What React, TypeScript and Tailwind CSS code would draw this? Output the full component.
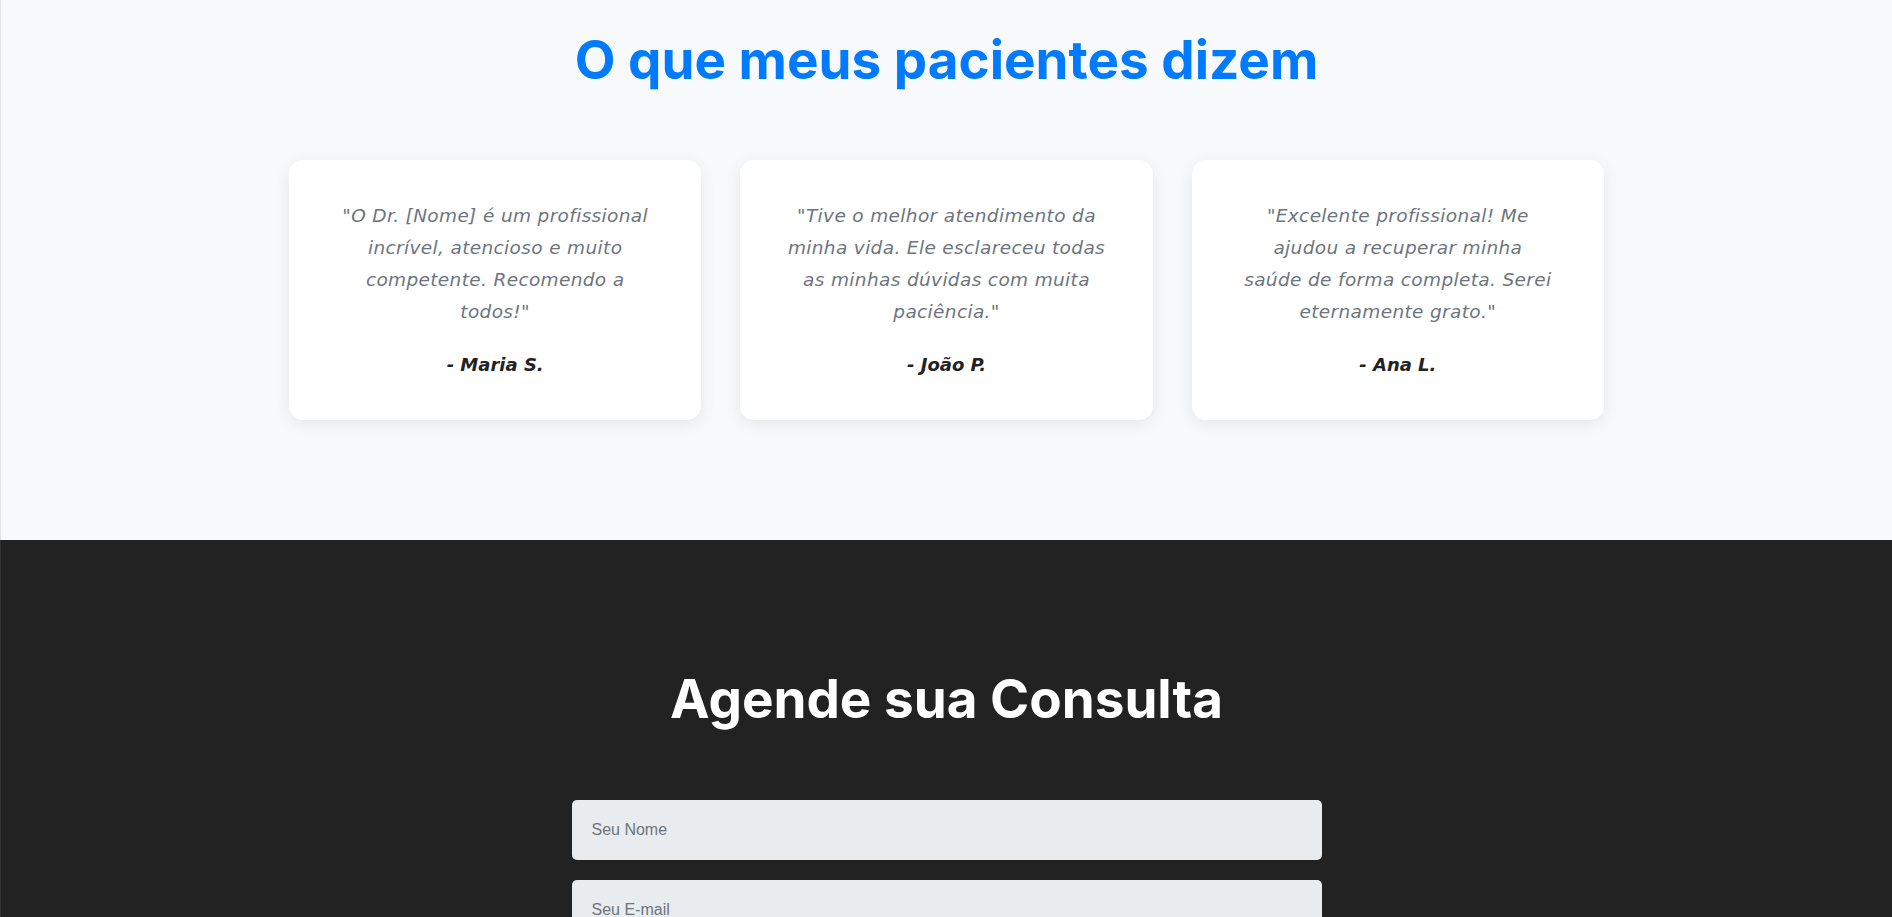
const depoimentos = [
  {
    linhas: ['"O Dr. [Nome] é um profissional', "incrível, atencioso e muito", "competente. Recomendo a", 'todos!"'],
    autor: "- Maria S.",
  },
  {
    linhas: ['"Tive o melhor atendimento da', "minha vida. Ele esclareceu todas", "as minhas dúvidas com muita", 'paciência."'],
    autor: "- João P.",
  },
  {
    linhas: ['"Excelente profissional! Me', "ajudou a recuperar minha", "saúde de forma completa. Serei", 'eternamente grato."'],
    autor: "- Ana L.",
  },
];

export default function App() {
  return (
    <div className="min-h-screen bg-[#222222] font-['Inter','Open_Sans',sans-serif]">
      {/* Depoimentos */}
      <section className="bg-[#f8f9fa] border-l border-[#e2e3e5] pt-[28px] pb-[120px]">
        <h2 className="text-center text-[53px] leading-[64px] font-bold text-[#007bff]">
          O que meus pacientes dizem
        </h2>

        <div className="mx-auto mt-[68px] grid w-[1315px] grid-cols-3 gap-[39px]">
          {depoimentos.map((d) => (
            <div key={d.autor} className="rounded-[14px] bg-white p-10 text-center shadow-[0_4px_16px_rgba(0,0,0,0.08)]">
              <p className="font-['DejaVu_Sans',sans-serif] text-[18.5px] leading-[32px] tracking-[0.35px] italic text-[#6c757d]">
                {d.linhas.map((l) => (
                  <span key={l} className="block">
                    {l}
                  </span>
                ))}
              </p>
              <p className="mt-[22px] font-['DejaVu_Sans',sans-serif] text-[18px] leading-[30px] font-bold italic text-[#222222]">
                {d.autor}
              </p>
            </div>
          ))}
        </div>
      </section>

      {/* Agendamento */}
      <section className="border-l border-[#333333] pt-[127px] pb-20">
        <h2 className="text-center text-[53px] leading-[64px] font-bold text-white">
          Agende sua Consulta
        </h2>

        <form className="mx-auto mt-[69px] flex w-[750px] flex-col gap-5">
          <input
            type="text"
            placeholder="Seu Nome"
            className="h-[60px] rounded-[5px] bg-[#e9ecef] px-5 font-['Liberation_Sans',Arial,sans-serif] text-base text-[#333] placeholder:text-[#6c757d] outline-none"
          />
          <input
            type="email"
            placeholder="Seu E-mail"
            className="h-[60px] rounded-[5px] bg-[#e9ecef] px-5 font-['Liberation_Sans',Arial,sans-serif] text-base text-[#333] placeholder:text-[#6c757d] outline-none"
          />
          <input
            type="tel"
            placeholder="Seu Telefone"
            className="h-[60px] rounded-[5px] bg-[#e9ecef] px-5 font-['Liberation_Sans',Arial,sans-serif] text-base text-[#333] placeholder:text-[#6c757d] outline-none"
          />
          <textarea
            rows={5}
            placeholder="Sua Mensagem"
            className="rounded-[5px] bg-[#e9ecef] p-5 font-['Liberation_Sans',Arial,sans-serif] text-base text-[#333] placeholder:text-[#6c757d] outline-none"
          />
          <button
            type="submit"
            className="h-[60px] rounded-[5px] bg-[#007bff] text-lg font-bold text-white"
          >
            Enviar Mensagem
          </button>
        </form>
      </section>
    </div>
  );
}
